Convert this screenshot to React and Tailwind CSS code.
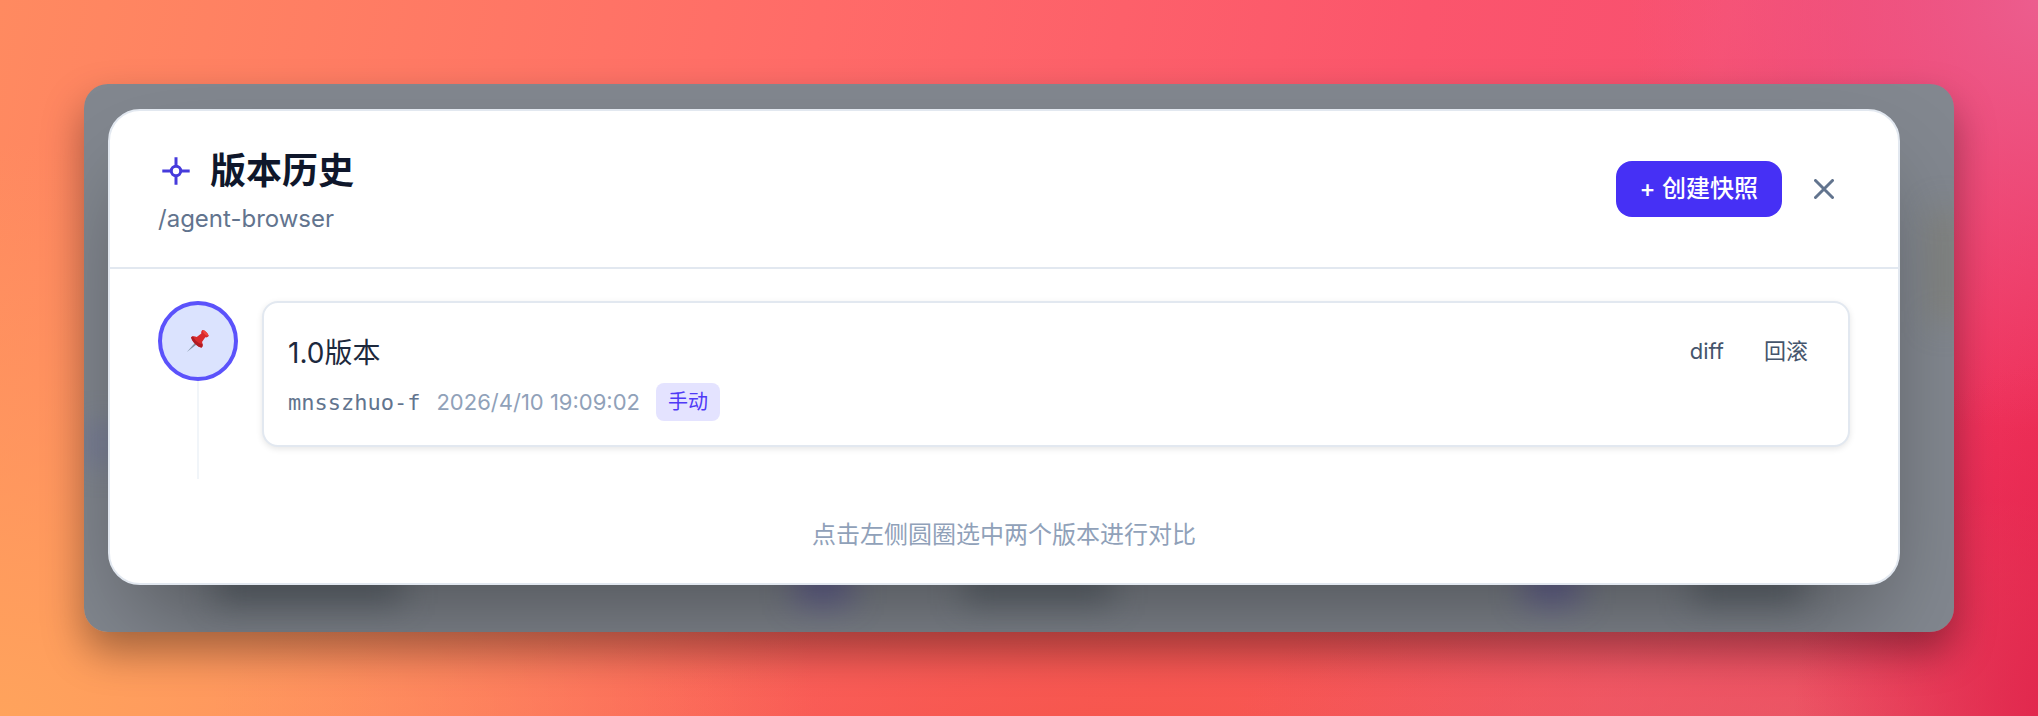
import { useState } from 'react'

const versions = [
  { id: 'mnsszhuo-f', title: '1.0版本', date: '2026/4/10 19:09:02', kind: '手动' },
]

function CommitIcon() {
  return (
    <svg viewBox="0 0 36 36" className="size-9 text-[#463bdc]" fill="none" stroke="currentColor" strokeWidth="3" aria-hidden="true">
      <circle cx="18" cy="18" r="4.7" />
      <path d="M18 4.3v9M18 22.7v9M4.3 18h9M22.7 18h9" />
    </svg>
  )
}

function CloseIcon() {
  return (
    <svg viewBox="0 0 20 20" className="size-5" fill="none" stroke="currentColor" strokeWidth="3" strokeLinecap="round" aria-hidden="true">
      <path d="M1.5 1.5l17 17M18.5 1.5l-17 17" />
    </svg>
  )
}

function PinIcon() {
  return (
    <svg viewBox="0 0 24 24" className="size-6" aria-hidden="true">
      <path d="M10.2 12.6L.9 23.1l10.9-8.7z" fill="#7f93a3" />
      <path d="M5.1 8.2c1.6-1.3 3.8-1.1 5.6-.2l4.6-3.6c-.3-1.3.1-2.5 1.1-3.3 2.6.2 5.4 2.8 6.3 6-.8 1-2 1.5-3.4 1.2l-3.3 4.7c.9 1.8 1.1 4-.2 5.6C11.3 17.8 6.4 13.3 5.1 8.2z" fill="#d8292b" />
      <path d="M5.1 8.2c1.3 5.1 6.2 9.6 10.7 10.4.8-1 1-2.2.8-3.4-4.2-.4-8.2-3.9-9.4-7.900-.8.1-1.500.4-2.100.9z" fill="#b01c22" />
      <path d="M16.4 1.1c2.6.2 5.4 2.8 6.3 6-2.5.3-6.3-3.2-6.3-6z" fill="#f0443c" />
    </svg>
  )
}

// Out-of-focus page content that shows around the dialog
function Backdrop() {
  return (
    <div className="absolute inset-0 bg-[#82878f]" aria-hidden="true">
      <div className="absolute bottom-7 left-[7%] h-9 w-[10%] bg-[#3c4650]/45 blur-lg" />
      <div className="absolute bottom-7 left-[38%] h-9 w-[3%] bg-[#4238a0]/45 blur-lg" />
      <div className="absolute bottom-7 left-[47%] h-9 w-[8%] bg-[#3c4650]/45 blur-lg" />
      <div className="absolute bottom-7 left-[77%] h-9 w-[3%] bg-[#4238a0]/45 blur-lg" />
      <div className="absolute bottom-7 left-[86%] h-9 w-[6%] bg-[#3c4650]/45 blur-lg" />
      <div className="absolute top-[62%] left-0 h-10 w-[2%] bg-[#5a5fae]/30 blur-lg" />
      <div className="absolute top-[23%] right-0 h-28 w-[1%] bg-[#7f7a60]/60 blur-lg" />
    </div>
  )
}

function VersionItem({ version, selected, onToggle }) {
  return (
    <li className="flex gap-6">
      <div className="flex flex-col items-center">
        <button
          type="button"
          aria-label={version.title}
          aria-pressed={selected}
          onClick={onToggle}
          className="flex size-20 shrink-0 items-center justify-center rounded-full border-4 border-[#5b52fb] bg-[#dbe3fe]"
        >
          <PinIcon />
        </button>
        <div className="w-0.5 flex-1 bg-slate-100" />
      </div>
      <article className="mb-8 min-w-0 flex-1 rounded-2xl border-2 border-slate-200 bg-white p-6 shadow-[0_2px_6px_rgba(0,0,0,0.1)]">
        <div className="flex items-start justify-between">
          <h3 className="text-[28px] leading-[52px] text-slate-800">{version.title}</h3>
          <div className="flex gap-2 text-[22px] leading-[48px] text-slate-600">
            <button type="button" className="px-4">diff</button>
            <button type="button" className="px-4">回滚</button>
          </div>
        </div>
        <div className="mt-1 flex items-center gap-4 text-[22px]">
          <code className="font-['DejaVu_Sans_Mono',monospace] text-slate-500">{version.id}</code>
          <time className="text-slate-400">{version.date}</time>
          <span className="rounded-lg bg-[#e4e3ff] px-3 text-xl leading-[38px] text-indigo-600">{version.kind}</span>
        </div>
      </article>
    </li>
  )
}

export default function App() {
  const [selected, setSelected] = useState([])

  const toggle = (id) => {
    setSelected(s => s.includes(id) ? s.filter(v => v !== id) : [...s, id].slice(-2))
  }

  return (
    <div className="min-h-screen bg-[radial-gradient(ellipse_20%_60%_at_100%_0%,#ec5d8e_0%,transparent_100%),radial-gradient(ellipse_14%_50%_at_102%_100%,#e0234b_0%,transparent_100%),radial-gradient(ellipse_30%_40%_at_90%_108%,#e95a66_0%,transparent_100%),radial-gradient(ellipse_40%_80%_at_0%_100%,#ffa35c_0%,transparent_100%),radial-gradient(ellipse_45%_50%_at_55%_105%,#f6564b_0%,transparent_100%),linear-gradient(100deg,#ff8a60_0%,#ff6b68_38%,#fb556c_66%,#f85070_80%,#f23660_92%,#ec2c54_100%)] p-[84px] font-['Inter','Noto_Sans_CJK_SC',sans-serif]">
      <div className="relative overflow-hidden rounded-3xl pt-[25px] pr-[54px] pb-[47px] pl-6 shadow-[0_20px_40px_rgba(0,0,0,0.36)]">
        <Backdrop />
        <section
          role="dialog"
          aria-labelledby="history-title"
          className="relative rounded-[32px] border-2 border-slate-200 bg-white shadow-[0_50px_100px_-24px_rgba(0,0,0,0.4)]"
        >
          <header className="flex items-center justify-between border-b-2 border-slate-200 px-12 py-8">
            <div>
              <h2 id="history-title" className="flex items-center gap-4 text-4xl leading-[56px] font-bold text-slate-900">
                <CommitIcon />
                版本历史
              </h2>
              <p className="mt-1 text-2xl leading-8 text-slate-500">/agent-browser</p>
            </div>
            <div className="flex items-center gap-4">
              <button type="button" className="h-14 rounded-2xl bg-[#4630f5] px-6 text-2xl font-medium text-white">
                + 创建快照
              </button>
              <button type="button" aria-label="关闭" className="p-4 text-slate-500">
                <CloseIcon />
              </button>
            </div>
          </header>

          <div className="px-12 py-8">
            <ol>
              {versions.map(v => (
                <VersionItem
                  key={v.id}
                  version={v}
                  selected={selected.includes(v.id)}
                  onToggle={() => toggle(v.id)}
                />
              ))}
            </ol>
            <p className="mt-10 text-center text-2xl leading-8 text-slate-400">点击左侧圆圈选中两个版本进行对比</p>
          </div>
        </section>
      </div>
    </div>
  )
}
